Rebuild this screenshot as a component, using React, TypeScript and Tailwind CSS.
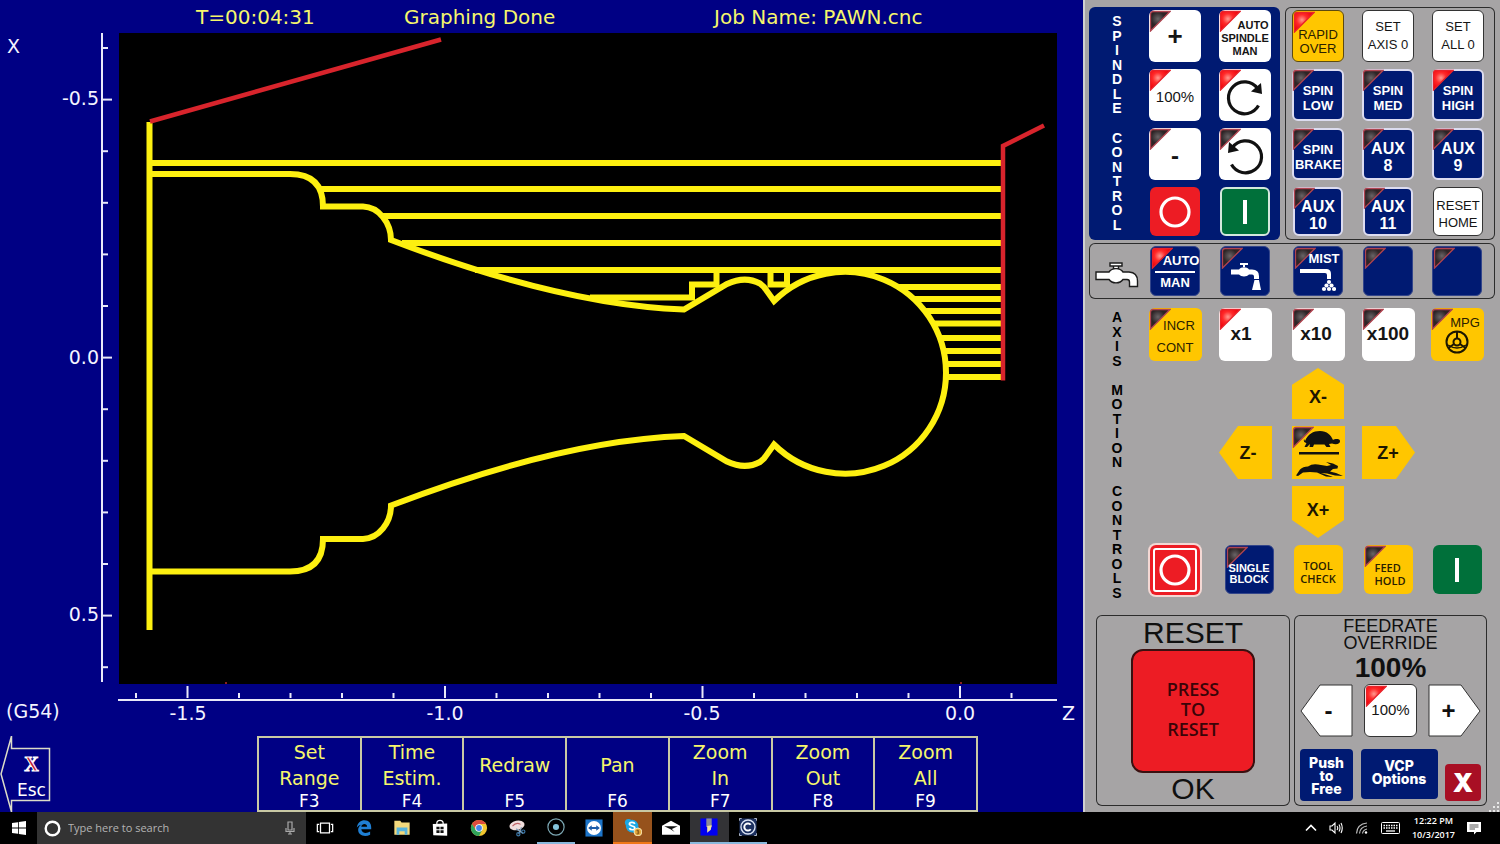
import React from 'react';
import { clsx } from 'clsx';

type Tone = 'white' | 'outlined' | 'navy' | 'navyFlat' | 'amber' | 'red' | 'green';

const tones: Record<Tone, string> = {
  white: 'bg-white text-[#151515]',
  outlined: 'bg-white text-[#151515] border border-[#333]',
  navy: 'bg-[#001a72] text-white border-2 border-[#dcdcf0]',
  navyFlat: 'bg-[#001a72] text-white border border-[#33458a]',
  amber: 'bg-[#ffc600] text-[#2a2000]',
  red: 'bg-[#ed1c24] text-white',
  green: 'bg-[#00703a] text-white',
};

type KeyProps = {
  tone: Tone;
  lamp?: 'on' | 'off';
  label?: string;
  className?: string;
  children?: React.ReactNode;
};

const Key: React.FC<KeyProps> = ({ tone, lamp, label, className, children }) => (
  <button
    type="button"
    aria-label={label}
    className={clsx('relative flex flex-col items-center justify-center rounded-md whitespace-nowrap', tones[tone], className)}
  >
    {lamp && (
      <svg className={clsx('absolute size-[22px]', tone === 'navy' ? '-top-0.5 -left-0.5' : 'top-0 left-0')} viewBox="0 0 22 22" aria-hidden="true">
        <path
          d="M1.5 4 Q1.5 1.5 4 1.5 H21 L1.5 21 Z"
          fill={lamp === 'on' ? 'url(#lampOn)' : 'url(#lampOff)'}
          stroke={lamp === 'on' ? '#e8222a' : '#b04450'}
          strokeWidth="1.300"
        />
      </svg>
    )}
    <span className="relative flex flex-col items-center">{children}</span>
  </button>
);

const VerticalLabel: React.FC<{ text: string; className?: string }> = ({ text, className }) => (
  <div className={clsx('flex flex-col items-center justify-between text-sm leading-none font-bold', className)}>
    {text.split('').map((c, i) => (
      <span key={i} className="h-3.5">{c}</span>
    ))}
  </div>
);

const LampDefs = () => (
  <svg className="absolute size-0" aria-hidden="true">
    <defs>
      <radialGradient id="lampOn" cx="0.38" cy="0.38" r="0.6">
        <stop offset="0" stopColor="#ff9a90" />
        <stop offset="0.45" stopColor="#ff2a2a" />
        <stop offset="1" stopColor="#f00008" />
      </radialGradient>
      <radialGradient id="lampOff" cx="0.38" cy="0.38" r="0.7">
        <stop offset="0" stopColor="#6a6466" />
        <stop offset="0.5" stopColor="#2c2426" />
        <stop offset="1" stopColor="#3c2024" />
      </radialGradient>
    </defs>
  </svg>
);

/* ---------- tool path graph ---------- */

const profile =
  'M150 174 H290 C314 174 323 187 323 206.500 H363 C379 207 391 223 391 240 C480 274 585 306 684 309.500 L727 284 Q745 275.500 760 283.500 L764 287 L774 301 A101 101 0 0 1 946 373';

const passes: [number, number][] = [
  [150, 163], [321, 189], [383, 216], [402, 243], [475, 270],
  [898, 287], [914, 299], [925, 311], [933, 323.5], [940, 338], [944, 351], [946, 364], [946, 377],
];

const xTicks = Array.from({ length: 18 }, (_, i) => 136 + i * 51.5);
const yTicks = Array.from({ length: 13 }, (_, i) => 48 + i * 51.6);

const ToolPathGraph = () => (
  <svg viewBox="0 33 1083 703" className="block h-auto w-full" fontFamily='"DejaVu Sans", sans-serif' fontSize="19" fill="#f4f4ff">
    <rect x="119" y="33" width="938" height="651" fill="#000" />

    <g stroke="#e8e8f8" strokeWidth="2">
      <path d="M102 33 V682 M118 700 H1057" />
      {yTicks.map((y, i) => (
        <path key={y} d={`M102 ${y} h${i % 5 === 1 ? 10 : 6}`} />
      ))}
      {xTicks.map((x, i) => (
        <path key={x} d={`M${x} 698 v${i % 5 === 1 ? -12 : -5}`} />
      ))}
    </g>
    <text x="7" y="53">X</text>
    <text x="99" y="105" textAnchor="end">-0.5</text>
    <text x="99" y="364" textAnchor="end">0.0</text>
    <text x="99" y="621" textAnchor="end">0.5</text>
    <text x="188" y="720" textAnchor="middle">-1.5</text>
    <text x="445" y="720" textAnchor="middle">-1.0</text>
    <text x="702" y="720" textAnchor="middle">-0.5</text>
    <text x="960" y="720" textAnchor="middle">0.0</text>
    <text x="1062" y="720">Z</text>
    <text x="6" y="718">(G54)</text>

    <g fill="none" stroke="#fdf010" strokeWidth="6">
      <path d="M149.500 122 V630" />
      <path d={profile} />
      <path d={profile} transform="matrix(1 0 0 -1 0 745.5)" />
      {passes.map(([x, y]) => (
        <path key={y} d={`M${x} ${y} H1001`} />
      ))}
      <path d="M590 297.500 H692 V284.500 H716.500 V270 M770.500 270 V284.500 H787 V270" />
    </g>
    <g fill="none" stroke="#d8242c" strokeWidth="4.500">
      <path d="M150 121.500 L441 39.500 M1003 380.500 V146 L1044 125.500" />
    </g>
    <path d="M225 683 h2 M960 683 h2" stroke="#8a2020" strokeWidth="2" />
  </svg>
);

const functionKeys = [
  { lines: ['Set', 'Range'], fkey: 'F3' },
  { lines: ['Time', 'Estim.'], fkey: 'F4' },
  { lines: ['Redraw'], fkey: 'F5' },
  { lines: ['Pan'], fkey: 'F6' },
  { lines: ['Zoom', 'In'], fkey: 'F7' },
  { lines: ['Zoom', 'Out'], fkey: 'F8' },
  { lines: ['Zoom', 'All'], fkey: 'F9' },
];

const GraphPanel = () => (
  <section className="flex min-w-0 flex-1 flex-col bg-[#000084] font-['DejaVu_Sans',sans-serif]">
    <header className="grid h-[33px] grid-cols-[196fr_208fr_310fr_369fr] items-center text-xl whitespace-nowrap text-[#f6f66c]">
      <span className="col-start-2">T=00:04:31</span>
      <span>Graphing Done</span>
      <span>Job Name: PAWN.cnc</span>
    </header>
    <ToolPathGraph />
    <div className="mt-auto grid h-[76px] grid-cols-[257fr_721fr_105fr]">
      <button type="button" className="relative h-full w-[51px] pt-2 pl-3 text-center text-[17px] leading-7 text-white">
        <svg className="absolute inset-0 h-full w-full" viewBox="0 0 51 76" fill="none" stroke="#dcdcc8" strokeWidth="1.500" aria-hidden="true">
          <path d="M11.500 0 L1 38 L11.500 76 V64.500 H49.500 V12.500 H11.500 Z" />
        </svg>
        <span className="relative block text-xl leading-6 font-bold text-[#c01830] [-webkit-text-stroke:1px_#fff] font-['Liberation_Serif',serif]">X</span>
        <span className="relative block">Esc</span>
      </button>
      <div className="grid grid-cols-7 border border-[#c9c9a4]">
        {functionKeys.map((k) => (
          <button key={k.fkey} type="button" className="flex flex-col border border-[#c9c9a4] text-[19px] leading-[26px] text-[#f6f66c]">
            <span className="flex w-full flex-1 flex-col items-center justify-center">
              {k.lines.map((l) => (
                <span key={l}>{l}</span>
              ))}
            </span>
            <span className="w-full text-center text-[17px] leading-[18px] text-white">{k.fkey}</span>
          </button>
        ))}
      </div>
    </div>
  </section>
);

/* ---------- operator panel icons ---------- */

const StopRing = () => (
  <svg className="size-8" viewBox="0 0 32 32" fill="none" stroke="currentColor" strokeWidth="3.200">
    <circle cx="16" cy="16" r="14" />
  </svg>
);

const StartBar = () => <span className="block h-6 w-1 bg-white" />;

const RotateArrow: React.FC<{ flipped?: boolean }> = ({ flipped }) => (
  <svg className={clsx('mt-1 size-10', flipped && '-scale-x-100')} viewBox="0 0 40 40">
    <path d="M32.500 11.500 A16 16 0 1 0 33.500 28.500" fill="none" stroke="#111" strokeWidth="3.200" />
    <path d="M26 14.500 L37 17 L36 6 Z" fill="#111" />
  </svg>
);

const Faucet = () => (
  <svg className="mt-2 h-7 w-11" viewBox="0 0 44 28" fill="#fff" stroke="#1c1c1c" strokeWidth="1.400">
    <path d="M15 2 H27 V5 H15 Z M18.500 5 H23.500 V8 H18.500 Z" />
    <path d="M1 11 H14 C17 6.500 25 6.500 28 11 H34 Q42.500 11.500 42.500 20 V25.500 H34.500 V21 Q34.500 18.500 32 18.500 H28 C25 23 17 23 14 18.500 H1 Z" />
  </svg>
);

const CoolantTap = () => (
  <svg className="mt-2.5 h-8 w-8" viewBox="0 0 32 32" fill="#fff">
    <path d="M11 3 H19 V5 H16 V7 H14 V5 H11 Z" />
    <path d="M2 9.500 H10 C12 6.500 18 6.500 20 9.500 H23 Q30 9.500 30 16 V19 H25 V16.500 Q25 14.500 23 14.500 H20 C18 17 12 17 10 14.500 H2 Z" />
    <path d="M25.500 20 H30 L32 30 H23 Z" />
  </svg>
);

const MistNozzle = () => (
  <svg className="h-7 w-9" viewBox="0 0 36 28" fill="#fff">
    <path d="M0 3 H27 Q31 3.500 31 8 V13 H27 V9 Q27 7 25 7 H0 Z" />
    {[[29, 16], [26.500, 19.500], [31.500, 19.500], [24, 23], [29, 23], [34, 23]].map(([x, y]) => (
      <circle key={`${x}-${y}`} cx={x} cy={y} r="2.100" />
    ))}
  </svg>
);

const HandWheel = () => (
  <svg className="size-6" viewBox="0 0 24 24" fill="none" stroke="#1c1600" strokeWidth="2">
    <circle cx="12" cy="12" r="10.500" />
    <circle cx="12" cy="12" r="3.500" />
    <path d="M12 1.500 V8.500 M9 14 L3.500 18 M15 14 L20.500 18" />
    <path d="M3 15 Q12 21 21 15" strokeWidth="1.500" />
  </svg>
);

const TurtleHare = () => (
  <svg className="h-[54px] w-[52px]" viewBox="0 0 52 54" fill="#111">
    <path d="M13 15 C16 8 21 5 28 5 C35 5 39 9 41 14 C43 12.500 48 12.500 48 15 C48.500 18 44 19 40 17.500 L37 18 L38.500 21 H34.500 L32.500 18.500 H22 L21 21 H17.500 L18 18 L15 21 H12.500 L14.500 17 Q11 16.500 12 13 Z" />
    <path d="M7 26 H47 V28.500 H7 Z" />
    <path d="M4 49.500 L8 43.500 Q11 40.500 16 40.500 Q20 37.500 26 38.500 L35 40 L39 39 L34 36 L41 37.500 L46 40 L45.500 42.500 L41 43 L38 45.500 L44 47 L51 50 L43 49.500 L35 47.500 L29 47 L37 49.500 L41 51 L34 50.500 L25 46.500 L18 46 L11 46.500 L6 50 Z" />
  </svg>
);

const JogKey: React.FC<{ dir: 'up' | 'down' | 'left' | 'right'; label: string }> = ({ dir, label }) => {
  const shapes = {
    up: '26,0 52,17 52,52 0,52 0,17',
    down: '0,0 52,0 52,34 26,52 0,34',
    left: '0,26 19,0 53,0 53,52 19,52',
    right: '0,0 34,0 53,26 34,52 0,52',
  };
  return (
    <button type="button" className="relative flex h-full w-[53px] items-center justify-center text-lg font-bold text-[#1c1600]">
      <svg className="absolute inset-0 h-full w-full" viewBox="0 0 53 52" preserveAspectRatio="none" aria-hidden="true">
        <polygon points={shapes[dir]} fill="#ffc600" />
      </svg>
      <span className={clsx('relative', dir === 'up' && 'pt-1.5', dir === 'down' && 'pb-1', dir === 'left' && 'pl-1.5')}>{label}</span>
    </button>
  );
};

const FeedKey: React.FC<{ dir: 'left' | 'right'; label: string }> = ({ dir, label }) => (
  <button type="button" className="relative flex size-[53px] items-center justify-center text-2xl font-bold">
    <svg className="absolute inset-0 h-full w-full" viewBox="0 0 53 53" fill="#fff" stroke="#333" aria-hidden="true">
      <polygon points={dir === 'left' ? '1,27 20,1 52,1 52,52 20,52' : '1,1 33,1 52,27 33,52 1,52'} />
    </svg>
    <span className={clsx('relative', dir === 'left' ? 'pl-1' : 'pr-3')}>{label}</span>
  </button>
);

/* ---------- operator panel ---------- */

const SpindleControl = () => (
  <div className="flex rounded-md bg-[#001a72] pt-[3px] pr-[9px] pb-1 text-white">
    <VerticalLabel text="SPINDLE CONTROL" className="mt-1 mb-1 mr-1 w-14" />
    <div className="grid grid-cols-[52px_52px] gap-x-[18px] gap-y-[7px]">
      <Key tone="white" lamp="off" className="h-13 text-[26px] leading-none font-bold">+</Key>
      <Key tone="white" lamp="on" className="h-13 pt-1 text-[11px] leading-[13px] font-bold">
        <span className="pl-4">AUTO</span>
        <span>SPINDLE</span>
        <span>MAN</span>
      </Key>
      <Key tone="white" lamp="on" className="h-13 pt-1 text-[15px]">100%</Key>
      <Key tone="white" lamp="on" label="Spindle clockwise" className="h-13"><RotateArrow /></Key>
      <Key tone="white" lamp="off" className="h-13 pt-1 text-2xl leading-none font-bold">-</Key>
      <Key tone="white" lamp="off" label="Spindle counterclockwise" className="h-13"><RotateArrow flipped /></Key>
      <Key tone="red" label="Spindle stop" className="mx-px h-[49px]"><StopRing /></Key>
      <Key tone="green" label="Spindle start" className="mx-px h-[49px] border-2 border-[#d4e8dc]"><StartBar /></Key>
    </div>
  </div>
);

const AuxKeys = () => (
  <div className="grid flex-1 grid-cols-[52px_52px_52px] justify-start gap-x-[18px] gap-y-[7px] rounded-md pt-[3px] pb-1 pl-[7px] ring-1 ring-[#2c2c2c] ring-inset">
    <Key tone="amber" lamp="on" className="h-13 border border-[#5c4a10] pt-3 text-[13px] leading-[14px]">
      <span>RAPID</span>
      <span>OVER</span>
    </Key>
    <Key tone="outlined" className="h-13 text-[13px] leading-[18px]">
      <span>SET</span>
      <span>AXIS 0</span>
    </Key>
    <Key tone="outlined" className="h-13 text-[13px] leading-[18px]">
      <span>SET</span>
      <span>ALL 0</span>
    </Key>
    <Key tone="navy" lamp="off" className="h-13 pt-1.5 text-[13px] leading-[15px] font-bold"><span>SPIN</span><span>LOW</span></Key>
    <Key tone="navy" lamp="off" className="h-13 pt-1.5 text-[13px] leading-[15px] font-bold"><span>SPIN</span><span>MED</span></Key>
    <Key tone="navy" lamp="on" className="h-13 pt-1.5 text-[13px] leading-[15px] font-bold"><span>SPIN</span><span>HIGH</span></Key>
    <Key tone="navy" lamp="off" className="h-13 pt-1.5 text-[13px] leading-[15px] font-bold"><span>SPIN</span><span>BRAKE</span></Key>
    <Key tone="navy" lamp="off" className="h-13 pt-1.5 text-base leading-[17px] font-bold"><span>AUX</span><span>8</span></Key>
    <Key tone="navy" lamp="off" className="h-13 pt-1.5 text-base leading-[17px] font-bold"><span>AUX</span><span>9</span></Key>
    <Key tone="navy" lamp="off" className="mx-px h-[49px] pt-1.5 text-base leading-[17px] font-bold"><span>AUX</span><span>10</span></Key>
    <Key tone="navy" lamp="off" className="mx-px h-[49px] pt-1.5 text-base leading-[17px] font-bold"><span>AUX</span><span>11</span></Key>
    <Key tone="outlined" className="mx-px h-[49px] pt-1 text-[13px] leading-[17px]"><span>RESET</span><span>HOME</span></Key>
  </div>
);

const CoolantRow = () => (
  <div className="mt-[3px] grid h-14 grid-cols-[56px_60px_80px_66px_74px_64px] items-center justify-items-center rounded-md ring-1 ring-[#2c2c2c] ring-inset">
    <Faucet />
    <Key tone="navyFlat" lamp="on" className="size-[50px] pt-0.5 text-[13px] leading-[18px] font-bold">
      <span className="pl-3">AUTO</span>
      <span className="my-px h-0.5 w-10 bg-white" />
      <span>MAN</span>
    </Key>
    <Key tone="navyFlat" lamp="off" label="Coolant flood" className="size-[50px]"><CoolantTap /></Key>
    <Key tone="navyFlat" lamp="off" className="size-[50px] pt-1 text-[13px] leading-[14px] font-bold">
      <span className="pl-3">MIST</span>
      <MistNozzle />
    </Key>
    <Key tone="navyFlat" lamp="off" label="Coolant aux 1" className="size-[50px]" />
    <Key tone="navyFlat" lamp="off" label="Coolant aux 2" className="size-[50px]" />
  </div>
);

const AxisControls = () => (
  <div className="mt-[9px] grid grid-cols-[56px_60px_80px_66px_74px_64px] grid-rows-[53px_51px_53px_52px_49px] justify-items-center gap-y-[7px] text-black">
    <VerticalLabel text="AXIS MOTION CONTROLS" className="row-span-5 mt-0.5 -mb-1.5" />
    <Key tone="amber" lamp="off" className="size-[53px] pt-1 text-[13px] leading-[22px]">
      <span className="pl-2">INCR</span>
      <span>CONT</span>
    </Key>
    <Key tone="white" lamp="on" className="size-[53px] pr-2 text-[19px] font-bold">x1</Key>
    <Key tone="white" lamp="off" className="size-[53px] pr-1 text-[19px] font-bold">x10</Key>
    <Key tone="white" lamp="off" className="size-[53px] text-[19px] font-bold">x100</Key>
    <Key tone="amber" lamp="off" className="size-[53px] text-[13px] leading-[14px]">
      <span className="pl-4">MPG</span>
      <HandWheel />
    </Key>

    <div className="col-start-4 row-start-2"><JogKey dir="up" label="X-" /></div>
    <div className="col-start-3 row-start-3"><JogKey dir="left" label="Z-" /></div>
    <Key tone="amber" lamp="off" label="Rapid or slow jog" className="col-start-4 row-start-3 h-[53px] w-[53px] rounded-none"><TurtleHare /></Key>
    <div className="col-start-5 row-start-3"><JogKey dir="right" label="Z+" /></div>
    <div className="col-start-4 row-start-4"><JogKey dir="down" label="X+" /></div>

    <Key tone="red" label="Cycle cancel" className="col-start-2 row-start-5 size-[50px] outline-2 -outline-offset-5 outline-white ring-2 ring-[#f4d8d4]"><StopRing /></Key>
    <Key tone="navyFlat" lamp="off" className="col-start-3 row-start-5 ml-2 size-[49px] pt-2 text-[11px] leading-[11px] font-bold"><span>SINGLE</span><span>BLOCK</span></Key>
    <Key tone="amber" className="col-start-4 row-start-5 size-[49px] pt-1 font-['Open_Sans',sans-serif] text-[11px] leading-[13px] font-semibold"><span>TOOL</span><span>CHECK</span></Key>
    <Key tone="amber" lamp="off" className="col-start-5 row-start-5 size-[49px] pt-2 font-['Open_Sans',sans-serif] text-[11px] leading-[13px] font-semibold"><span className="w-full pl-1 text-left">FEED</span><span className="pl-1">HOLD</span></Key>
    <Key tone="green" label="Cycle start" className="col-start-6 row-start-5 size-[49px]"><StartBar /></Key>
  </div>
);

const ResetBox = () => (
  <div className="flex w-[194px] flex-col items-center rounded-md pt-0.5 text-[30px] leading-8 text-[#101010] ring-1 ring-[#2c2c2c] ring-inset">
    <span>RESET</span>
    <button type="button" className="size-[124px] rounded-xl border-2 border-[#3a1010] bg-[#ed1c24] pb-1 font-['Open_Sans',sans-serif] text-lg leading-5 font-semibold text-[#3a0408]">
      PRESS<br />TO<br />RESET
    </button>
    <span>OK</span>
  </div>
);

const FeedrateBox = () => (
  <div className="w-[193px] rounded-md px-[6px] pt-[3px] text-center text-[#101010] ring-1 ring-[#2c2c2c] ring-inset">
    <div className="text-lg leading-[17px]">
      FEEDRATE<br />OVERRIDE
    </div>
    <div className="text-[28px] leading-8 font-bold">100%</div>
    <div className="flex items-center justify-between">
      <FeedKey dir="left" label="-" />
      <Key tone="outlined" lamp="on" className="size-[53px] text-[15px]">100%</Key>
      <FeedKey dir="right" label="+" />
    </div>
    <div className="mt-3 flex items-end justify-between font-['Inter',sans-serif] text-sm leading-[13px] font-extrabold text-white">
      <button type="button" className="h-[52px] w-[53px] rounded bg-[#001a72]">Push<br />to<br />Free</button>
      <button type="button" className="mb-0.5 h-[50px] w-[77px] rounded bg-[#001a72] pb-1">VCP<br />Options</button>
      <button type="button" className="h-[37px] w-9 rounded bg-[#a80f24] text-[26px] font-black">X</button>
    </div>
  </div>
);

const OperatorPanel = () => (
  <aside className="flex w-[417px] shrink-0 flex-col border-l-2 border-[#d0d0d0] bg-[#a6a4a5] pt-[7px] pr-[5px] pl-1 font-['Liberation_Sans',sans-serif]">
    <div className="flex gap-[5px]">
      <SpindleControl />
      <AuxKeys />
    </div>
    <CoolantRow />
    <AxisControls />
    <div className="mt-[21px] flex h-[191px] gap-1 pl-[7px]">
      <ResetBox />
      <FeedrateBox />
    </div>
    <div className="mt-auto -mr-1 flex h-1.5 items-end justify-end">
      <svg className="size-2.5" viewBox="0 0 10 10" fill="#e8e8e8" aria-hidden="true">
        <path d="M8 0h2v2h-2z M8 4h2v2h-2z M4 4h2v2h-2z M8 8h2v2h-2z M4 8h2v2h-2z M0 8h2v2h-2z" />
      </svg>
    </div>
  </aside>
);

/* ---------- taskbar ---------- */

const taskbarApps: { name: string; cell?: string; icon: React.ReactNode }[] = [
  {
    name: 'Task View',
    icon: <path d="M5 4.500 H15 V15.500 H5 Z M3.500 6 H1.500 V14 H3.500 M16.500 6 H18.500 V14 H16.500" fill="none" stroke="#fff" strokeWidth="1.400" />,
  },
  {
    name: 'Edge',
    icon: <path d="M2 9.500 C3 4 6.500 1.500 10.500 1.500 C15.500 1.500 18 5 18 9.500 V11.500 H7 C7.500 16 13 16.500 16.800 14 V17.500 C11 20.500 3.500 18.500 3.500 12 C3.500 9 5.500 6.800 7.500 6 C5.200 6.300 3.500 7.700 2 9.500 Z M7 8.500 H13.500 C13.500 4.500 7.500 4.500 7 8.500 Z" fill="#1f7fd4" fillRule="evenodd" />,
  },
  {
    name: 'File Explorer',
    icon: (
      <>
        <path d="M1.500 2 H8 L9.500 4 H18.500 V17.500 H1.500 Z" fill="#f3d97c" />
        <path d="M4 9.500 H16 V17.500 H13 V13.500 H7 V17.500 H4 Z" fill="#58b4dc" />
      </>
    ),
  },
  {
    name: 'Store',
    icon: (
      <>
        <path d="M2 5.500 L18 5 V18.500 L2.500 18 Z" fill="#fff" />
        <path d="M6.500 6 V4 Q7 1.500 10 1.500 Q13 1.500 13.500 4 V6" fill="none" stroke="#fff" strokeWidth="1.300" />
        <path d="M6 8.500 H9.500 V11.500 H6 Z M10.500 8.500 H14 V11.500 H10.500 Z M6 12.500 H9.500 V15.500 H6 Z M10.500 12.500 H14 V15.500 H10.500 Z" fill="#111" />
      </>
    ),
  },
  {
    name: 'Chrome',
    icon: (
      <>
        <circle cx="10" cy="10" r="9" fill="#f2c62f" />
        <path d="M2.200 5.500 A9 9 0 0 1 17.800 5.500 H10 L6.300 12 Z" fill="#dd4b3e" />
        <path d="M2.200 5.500 A9 9 0 0 0 10 19 L13.700 12 L6.300 12 Z" fill="#2fa35a" />
        <circle cx="10" cy="10" r="4.200" fill="#fff" />
        <circle cx="10" cy="10" r="3.200" fill="#4583ec" />
      </>
    ),
  },
  {
    name: 'Snipping Tool',
    icon: (
      <>
        <ellipse cx="10" cy="7" rx="8.500" ry="5.200" fill="#f0dede" transform="rotate(-12 10 7)" />
        <path d="M5 8 Q9 3 14 6" fill="none" stroke="#c06468" strokeWidth="1.200" />
        <path d="M9 11 L17 16 M15 9 L12 17" stroke="#8aa4bc" strokeWidth="1.400" />
        <circle cx="11.500" cy="17" r="1.800" fill="none" stroke="#3c78a8" strokeWidth="1.300" />
        <circle cx="17" cy="14" r="1.800" fill="none" stroke="#3c78a8" strokeWidth="1.300" />
      </>
    ),
  },
  {
    name: 'Recorder',
    cell: 'border-b-2 border-[#88b8dc]',
    icon: (
      <>
        <circle cx="10" cy="10" r="9" fill="none" stroke="#7ca8b4" strokeWidth="1.300" />
        <circle cx="10" cy="10" r="3.400" fill="#84c4dc" />
      </>
    ),
  },
  {
    name: 'TeamViewer',
    icon: (
      <>
        <path d="M0.500 0.500 H19.500 V19.500 H0.500 Z" fill="#1c74c8" />
        <circle cx="10" cy="10" r="7.800" fill="#fff" />
        <path d="M3.500 10 L7.500 7 V9 H12.500 V7 L16.500 10 L12.500 13 V11 H7.500 V13 Z" fill="#1c5ca8" />
      </>
    ),
  },
  {
    name: 'Skype',
    cell: 'bg-[#96521c] border-b-2 border-[#f07818]',
    icon: (
      <>
        <circle cx="9" cy="9" r="7" fill="#1ca8e4" />
        <circle cx="5" cy="5" r="4" fill="#1ca8e4" />
        <circle cx="13" cy="13" r="4" fill="#1ca8e4" />
        <path d="M12 6.500 C11 4 6 4.500 6 6.800 C6 9.500 12 8.300 12 11 C12 13.700 7 13.700 6 11.200" fill="none" stroke="#fff" strokeWidth="1.900" />
        <circle cx="15.500" cy="15.500" r="4.300" fill="#e4a83c" stroke="#fff0c0" />
        <path d="M14 14 Q16 12.800 16.500 14.500 Q16.500 15.500 15 15.500 Q17 15.500 16.500 17 Q16 18 14 17.500" fill="none" stroke="#7a4a10" />
      </>
    ),
  },
  {
    name: 'Mail',
    icon: (
      <>
        <path d="M0 7.500 L10 2 L20 7.500 V17.500 H0 Z" fill="#fff" />
        <path d="M2.500 8 H17.500 L11 11 L14 14.500 L9.500 11.500 Z" fill="#111" />
      </>
    ),
  },
  {
    name: 'Mach editor',
    cell: 'bg-[#333336] border-b-2 border-[#88b8dc]',
    icon: (
      <>
        <path d="M0.500 0.500 H19.500 V19.500 H0.500 Z" fill="#0000f0" />
        <path d="M7 0.500 H13 V10 H7 Z" fill="#8c8c94" />
        <path d="M8 9 L13 8 L12 13 L8 16.500 Z" fill="#f0e0a0" />
      </>
    ),
  },
  {
    name: 'CNC control',
    cell: 'border-b-2 border-[#88b8dc]',
    icon: (
      <>
        <path d="M0.500 0.500 H19.500 V19.500 H0.500 Z" fill="#1c3060" />
        <circle cx="10" cy="10" r="7.800" fill="none" stroke="#dce4f4" strokeWidth="1.500" />
        <path d="M13 7.500 A4 4 0 1 0 13 12.500" fill="none" stroke="#fff" strokeWidth="2.200" />
        <path d="M0.500 3 V0.500 H3 M17 0.500 H19.500 V3 M0.500 17 V19.500 H3 M17 19.500 H19.500 V17" fill="none" stroke="#c8d0e0" />
      </>
    ),
  },
];

const Taskbar = () => (
  <footer className="flex h-8 items-stretch bg-black font-['Open_Sans',sans-serif] text-white">
    <button type="button" aria-label="Start" className="flex w-[37px] items-center justify-center">
      <svg className="size-3.5" viewBox="0 0 14 14" fill="#fff">
        <path d="M0 2 L6 1.200 V6.600 H0 Z M6.800 1.100 L14 0 V6.600 H6.800 Z M0 7.400 H6 V12.800 L0 12 Z M6.800 7.400 H14 V14 L6.800 12.900 Z" />
      </svg>
    </button>
    <label className="flex w-[269px] items-center bg-[#333] pr-2.5 pl-[7px]">
      <svg className="size-[17px] shrink-0" viewBox="0 0 17 17" fill="none" stroke="#fff" strokeWidth="2.400" aria-hidden="true">
        <circle cx="8.500" cy="8.500" r="6.800" />
      </svg>
      <input
        type="text"
        aria-label="Search"
        placeholder="Type here to search"
        className="ml-[7px] min-w-0 flex-1 bg-transparent text-[11px] text-white outline-none placeholder:text-[#b4b4b4]"
      />
      <svg className="h-3.5 w-3" viewBox="0 0 12 14" fill="none" stroke="#aaa" strokeWidth="1.200" aria-hidden="true">
        <path d="M4 1 H8 V9 H4 Z M2 7 V10.500 H10 V7 M6 10.500 V13 M4 13 H8" />
      </svg>
    </label>
    <nav className="flex w-[461px]">
      {taskbarApps.map((app) => (
        <button key={app.name} type="button" aria-label={app.name} className={clsx('flex flex-1 items-center justify-center', app.cell)}>
          <svg className="size-[18px]" viewBox="0 0 20 20">{app.icon}</svg>
        </button>
      ))}
    </nav>
    <div className="ml-auto flex items-center gap-3 pr-[19px]">
      <svg className="h-2 w-3" viewBox="0 0 12 8" fill="none" stroke="#fff" strokeWidth="1.600">
        <path d="M1 6.500 L6 1.500 L11 6.500" />
      </svg>
      <svg className="size-3.5" viewBox="0 0 14 14" fill="none" stroke="#fff" strokeWidth="1.100">
        <path d="M1 5 H3 L6 2 V12 L3 9 H1 Z M8 5 Q9.500 7 8 9 M10 3.500 Q12 7 10 10.500 M12 2 Q14.500 7 12 12" />
      </svg>
      <svg className="size-3.5" viewBox="0 0 14 14" fill="none" stroke="#bbb" strokeWidth="1.200">
        <path d="M1.500 12.500 Q2 3 12 2 M4.500 12.500 Q5 6 12 5 M7.500 12.500 Q8 9 12 8" />
        <circle cx="11" cy="11.500" r="1.200" fill="#fff" stroke="none" />
      </svg>
      <svg className="h-3 w-[19px]" viewBox="0 0 19 12" fill="none" stroke="#fff">
        <rect x="0.500" y="0.500" width="18" height="11" rx="1" />
        <path d="M2.500 3.500 H16.500 M2.500 6 H16.500" strokeDasharray="1.500 1" strokeWidth="1.500" />
        <path d="M5 9 H14" strokeWidth="1.300" />
      </svg>
      <div className="text-center text-[9px] leading-[14px] font-semibold">
        12:22 PM<br />10/3/2017
      </div>
      <svg className="h-3.5 w-3.5" viewBox="0 0 14 14">
        <path d="M0 1 H14 V11 H9.500 L7 13.500 V11 H0 Z" fill="#fff" />
        <path d="M2.500 4 H11.500 M2.500 6 H11.500 M2.500 8 H8" stroke="#444" strokeWidth="0.900" />
      </svg>
    </div>
  </footer>
);

const App: React.FC = () => (
  <div className="flex min-h-screen flex-col bg-black">
    <LampDefs />
    <main className="flex flex-1">
      <GraphPanel />
      <OperatorPanel />
    </main>
    <Taskbar />
  </div>
);

export default App;
